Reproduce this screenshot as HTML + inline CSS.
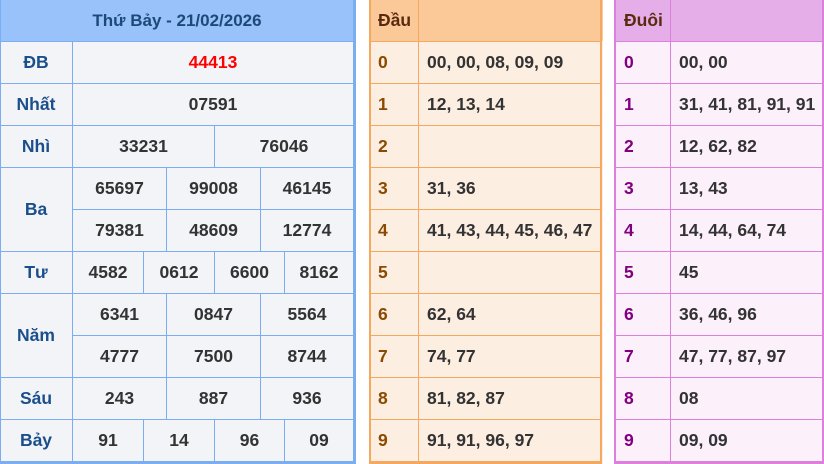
<!DOCTYPE html>
<html><head><meta charset="utf-8"><style>
body{margin:0;width:824px;height:464px;background:#fff;position:relative;overflow:hidden;font-family:"Liberation Sans",sans-serif;font-weight:bold;font-size:17.5px;color:#333}
div{position:absolute;box-sizing:border-box}
.c{display:flex;align-items:center;justify-content:center}
.l{display:flex;align-items:center;padding-left:8px;white-space:nowrap}
.lb{color:#1b4f8c}
.h{background:#7aaef0}
.o{background:#f4a860}
.p{background:#dd80dd}
</style></head><body>
<div style="left:0;top:0;width:356px;height:464px;background:#f3f4f8"></div>
<div class="c" style="left:0;top:0;width:354px;height:41px;background:#99c1fa;color:#1c4a78;font-size:17px">Thứ Bảy - 21/02/2026</div>
<div class="h" style="left:0;top:0;width:1px;height:464px"></div>
<div class="h" style="left:353px;top:0;width:3px;height:464px"></div>
<div class="h" style="left:0;top:461px;width:356px;height:3px"></div>
<div class="h" style="left:72px;top:41px;width:1px;height:420px"></div>
<div class="h" style="left:0;top:41px;width:354px;height:1px"></div>
<div class="h" style="left:0;top:83px;width:354px;height:1px"></div>
<div class="h" style="left:0;top:125px;width:354px;height:1px"></div>
<div class="h" style="left:0;top:167px;width:354px;height:1px"></div>
<div class="h" style="left:72px;top:209px;width:282px;height:1px"></div>
<div class="h" style="left:0;top:251px;width:354px;height:1px"></div>
<div class="h" style="left:0;top:293px;width:354px;height:1px"></div>
<div class="h" style="left:72px;top:335px;width:282px;height:1px"></div>
<div class="h" style="left:0;top:377px;width:354px;height:1px"></div>
<div class="h" style="left:0;top:419px;width:354px;height:1px"></div>
<div class="h" style="left:214px;top:125px;width:1px;height:42px"></div>
<div class="h" style="left:166px;top:167px;width:1px;height:84px"></div>
<div class="h" style="left:260px;top:167px;width:1px;height:84px"></div>
<div class="h" style="left:143px;top:251px;width:1px;height:42px"></div>
<div class="h" style="left:214px;top:251px;width:1px;height:42px"></div>
<div class="h" style="left:284px;top:251px;width:1px;height:42px"></div>
<div class="h" style="left:166px;top:293px;width:1px;height:126px"></div>
<div class="h" style="left:260px;top:293px;width:1px;height:126px"></div>
<div class="h" style="left:143px;top:419px;width:1px;height:42px"></div>
<div class="h" style="left:214px;top:419px;width:1px;height:42px"></div>
<div class="h" style="left:284px;top:419px;width:1px;height:42px"></div>
<div class="c lb" style="left:0;top:42px;width:72px;height:41px">ĐB</div>
<div class="c lb" style="left:0;top:84px;width:72px;height:41px">Nhất</div>
<div class="c lb" style="left:0;top:126px;width:72px;height:41px">Nhì</div>
<div class="c lb" style="left:0;top:168px;width:72px;height:83px">Ba</div>
<div class="c lb" style="left:0;top:252px;width:72px;height:41px">Tư</div>
<div class="c lb" style="left:0;top:294px;width:72px;height:83px">Năm</div>
<div class="c lb" style="left:0;top:378px;width:72px;height:41px">Sáu</div>
<div class="c lb" style="left:0;top:420px;width:72px;height:41px">Bảy</div>
<div class="c" style="left:73px;top:42px;width:280px;height:41px;color:#f00">44413</div>
<div class="c" style="left:73px;top:84px;width:280px;height:41px">07591</div>
<div class="c" style="left:73px;top:126px;width:141px;height:41px">33231</div>
<div class="c" style="left:215px;top:126px;width:138px;height:41px">76046</div>
<div class="c" style="left:73px;top:168px;width:93px;height:41px">65697</div>
<div class="c" style="left:167px;top:168px;width:93px;height:41px">99008</div>
<div class="c" style="left:261px;top:168px;width:92px;height:41px">46145</div>
<div class="c" style="left:73px;top:210px;width:93px;height:41px">79381</div>
<div class="c" style="left:167px;top:210px;width:93px;height:41px">48609</div>
<div class="c" style="left:261px;top:210px;width:92px;height:41px">12774</div>
<div class="c" style="left:73px;top:252px;width:70px;height:41px">4582</div>
<div class="c" style="left:144px;top:252px;width:70px;height:41px">0612</div>
<div class="c" style="left:215px;top:252px;width:69px;height:41px">6600</div>
<div class="c" style="left:285px;top:252px;width:68px;height:41px">8162</div>
<div class="c" style="left:73px;top:294px;width:93px;height:41px">6341</div>
<div class="c" style="left:167px;top:294px;width:93px;height:41px">0847</div>
<div class="c" style="left:261px;top:294px;width:92px;height:41px">5564</div>
<div class="c" style="left:73px;top:336px;width:93px;height:41px">4777</div>
<div class="c" style="left:167px;top:336px;width:93px;height:41px">7500</div>
<div class="c" style="left:261px;top:336px;width:92px;height:41px">8744</div>
<div class="c" style="left:73px;top:378px;width:93px;height:41px">243</div>
<div class="c" style="left:167px;top:378px;width:93px;height:41px">887</div>
<div class="c" style="left:261px;top:378px;width:92px;height:41px">936</div>
<div class="c" style="left:73px;top:420px;width:70px;height:41px">91</div>
<div class="c" style="left:144px;top:420px;width:70px;height:41px">14</div>
<div class="c" style="left:215px;top:420px;width:69px;height:41px">96</div>
<div class="c" style="left:285px;top:420px;width:68px;height:41px">09</div>

<div style="left:369px;top:0;width:234px;height:464px;background:#fdeee2"></div>
<div style="left:369px;top:0;width:234px;height:41px;background:#fbc998"></div>
<div class="o" style="left:369px;top:0;width:2px;height:464px"></div>
<div class="o" style="left:600px;top:0;width:2px;height:464px"></div>
<div class="o" style="left:418px;top:0;width:1px;height:461px"></div>
<div class="o" style="left:369px;top:461px;width:233px;height:3px"></div>
<div class="o" style="left:369px;top:41px;width:233px;height:1px"></div>
<div class="o" style="left:369px;top:83px;width:233px;height:1px"></div>
<div class="o" style="left:369px;top:125px;width:233px;height:1px"></div>
<div class="o" style="left:369px;top:167px;width:233px;height:1px"></div>
<div class="o" style="left:369px;top:209px;width:233px;height:1px"></div>
<div class="o" style="left:369px;top:251px;width:233px;height:1px"></div>
<div class="o" style="left:369px;top:293px;width:233px;height:1px"></div>
<div class="o" style="left:369px;top:335px;width:233px;height:1px"></div>
<div class="o" style="left:369px;top:377px;width:233px;height:1px"></div>
<div class="o" style="left:369px;top:419px;width:233px;height:1px"></div>
<div class="l" style="left:370px;top:0;width:48px;height:41px;color:#5a2a10">Đầu</div>
<div class="l" style="left:370px;top:42px;width:48px;height:41px;color:#8b4a00">0</div>
<div class="l" style="left:370px;top:84px;width:48px;height:41px;color:#8b4a00">1</div>
<div class="l" style="left:370px;top:126px;width:48px;height:41px;color:#8b4a00">2</div>
<div class="l" style="left:370px;top:168px;width:48px;height:41px;color:#8b4a00">3</div>
<div class="l" style="left:370px;top:210px;width:48px;height:41px;color:#8b4a00">4</div>
<div class="l" style="left:370px;top:252px;width:48px;height:41px;color:#8b4a00">5</div>
<div class="l" style="left:370px;top:294px;width:48px;height:41px;color:#8b4a00">6</div>
<div class="l" style="left:370px;top:336px;width:48px;height:41px;color:#8b4a00">7</div>
<div class="l" style="left:370px;top:378px;width:48px;height:41px;color:#8b4a00">8</div>
<div class="l" style="left:370px;top:420px;width:48px;height:41px;color:#8b4a00">9</div>
<div class="l" style="left:419px;top:42px;width:180px;height:41px">00, 00, 08, 09, 09</div>
<div class="l" style="left:419px;top:84px;width:180px;height:41px">12, 13, 14</div>
<div class="l" style="left:419px;top:168px;width:180px;height:41px">31, 36</div>
<div class="l" style="left:419px;top:210px;width:181px;height:41px">41, 43, 44, 45, 46, 47</div>
<div class="l" style="left:419px;top:294px;width:180px;height:41px">62, 64</div>
<div class="l" style="left:419px;top:336px;width:180px;height:41px">74, 77</div>
<div class="l" style="left:419px;top:378px;width:180px;height:41px">81, 82, 87</div>
<div class="l" style="left:419px;top:420px;width:180px;height:41px">91, 91, 96, 97</div>

<div style="left:614px;top:0;width:210px;height:464px;background:#fcf0fb"></div>
<div style="left:614px;top:0;width:210px;height:41px;background:#e5aee8"></div>
<div class="p" style="left:614px;top:0;width:2px;height:464px"></div>
<div class="p" style="left:822px;top:0;width:2px;height:464px"></div>
<div class="p" style="left:670px;top:0;width:1px;height:461px"></div>
<div class="p" style="left:614px;top:461px;width:210px;height:3px"></div>
<div class="p" style="left:614px;top:41px;width:210px;height:1px"></div>
<div class="p" style="left:614px;top:83px;width:210px;height:1px"></div>
<div class="p" style="left:614px;top:125px;width:210px;height:1px"></div>
<div class="p" style="left:614px;top:167px;width:210px;height:1px"></div>
<div class="p" style="left:614px;top:209px;width:210px;height:1px"></div>
<div class="p" style="left:614px;top:251px;width:210px;height:1px"></div>
<div class="p" style="left:614px;top:293px;width:210px;height:1px"></div>
<div class="p" style="left:614px;top:335px;width:210px;height:1px"></div>
<div class="p" style="left:614px;top:377px;width:210px;height:1px"></div>
<div class="p" style="left:614px;top:419px;width:210px;height:1px"></div>
<div class="l" style="left:616px;top:0;width:54px;height:41px;color:#5a2a10">Đuôi</div>
<div class="l" style="left:616px;top:42px;width:54px;height:41px;color:#800080">0</div>
<div class="l" style="left:616px;top:84px;width:54px;height:41px;color:#800080">1</div>
<div class="l" style="left:616px;top:126px;width:54px;height:41px;color:#800080">2</div>
<div class="l" style="left:616px;top:168px;width:54px;height:41px;color:#800080">3</div>
<div class="l" style="left:616px;top:210px;width:54px;height:41px;color:#800080">4</div>
<div class="l" style="left:616px;top:252px;width:54px;height:41px;color:#800080">5</div>
<div class="l" style="left:616px;top:294px;width:54px;height:41px;color:#800080">6</div>
<div class="l" style="left:616px;top:336px;width:54px;height:41px;color:#800080">7</div>
<div class="l" style="left:616px;top:378px;width:54px;height:41px;color:#800080">8</div>
<div class="l" style="left:616px;top:420px;width:54px;height:41px;color:#800080">9</div>
<div class="l" style="left:671px;top:42px;width:151px;height:41px">00, 00</div>
<div class="l" style="left:671px;top:84px;width:153px;height:41px">31, 41, 81, 91, 91</div>
<div class="l" style="left:671px;top:126px;width:151px;height:41px">12, 62, 82</div>
<div class="l" style="left:671px;top:168px;width:151px;height:41px">13, 43</div>
<div class="l" style="left:671px;top:210px;width:151px;height:41px">14, 44, 64, 74</div>
<div class="l" style="left:671px;top:252px;width:151px;height:41px">45</div>
<div class="l" style="left:671px;top:294px;width:151px;height:41px">36, 46, 96</div>
<div class="l" style="left:671px;top:336px;width:151px;height:41px">47, 77, 87, 97</div>
<div class="l" style="left:671px;top:378px;width:151px;height:41px">08</div>
<div class="l" style="left:671px;top:420px;width:151px;height:41px">09, 09</div>
</body></html>
